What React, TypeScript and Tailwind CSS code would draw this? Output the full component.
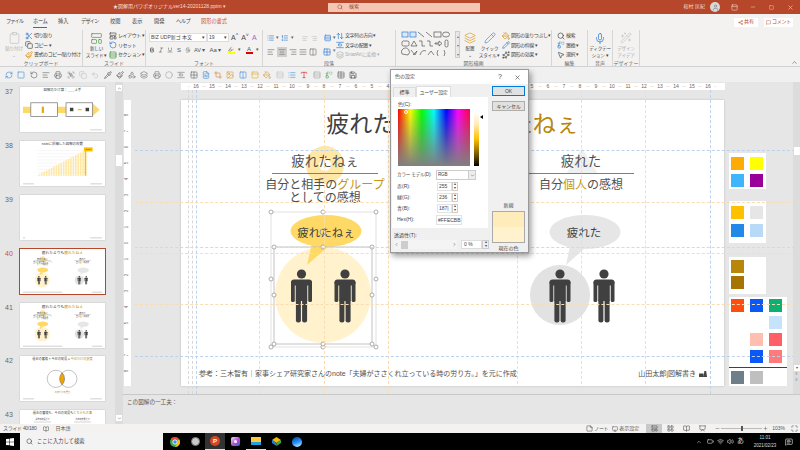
import React from "react";
import {
  Scissors, Copy, Paintbrush, Clipboard, LayoutTemplate, RotateCcw, Rows3, Plus, Search, Share2, MessageSquare,
  Minus, X, Square, Bold, Italic, Underline, Strikethrough, List, ListOrdered, AlignLeft, AlignCenter, AlignRight,
  AlignJustify, Columns2, ArrowUpDown, AlignVerticalSpaceAround, Layers, PaintBucket, Pencil, Sparkles, Replace,
  MousePointer2, Mic, Image, ChevronUp, ChevronDown, ChevronLeft, ChevronRight, RefreshCw, Undo2, Grid2x2,
  Printer, Save, Shapes, Table, Type, Highlighter, FileText, Monitor, LayoutGrid, BookOpen, Presentation, Maximize,
  StickyNote, Wifi, Volume2, Battery, MessageSquareText, User, PanelTop, Circle, Pipette, Wand2, Crop, Group as GroupIcon,
} from "lucide-react";

const GOLD = "#b8860b";
const DARK = "#404040";

function Person({ x, y = 272 }: { x: number; y?: number }) {
  return (
    <g transform={`translate(${x} ${y})`} fill="#404040">
      <circle cx={0} cy={5} r={4.6} />
      <rect x={-10.5} y={10.5} width={21} height={6} rx={3} />
      <rect x={-10.5} y={12} width={3.8} height={21} rx={1.6} />
      <rect x={6.7} y={12} width={3.8} height={21} rx={1.6} />
      <rect x={-5.8} y={12} width={11.6} height={20} />
      <rect x={-5.6} y={30} width={5} height={23.5} rx={2.2} />
      <rect x={0.6} y={30} width={5} height={23.5} rx={2.2} />
    </g>
  );
}

function HandleDot({ x, y }: { x: number; y: number }) {
  return <circle cx={x} cy={y} r={2} fill="#fff" stroke="#8c8c8c" strokeWidth={0.7} />;
}

function LeftFigure() {
  const outer = [[271, 215], [323, 215], [376, 215], [271, 282], [376, 282], [271, 350], [323, 350], [376, 350]];
  const inner = [[274, 250], [323, 250], [372, 250], [274, 298], [372, 298], [274, 347], [323, 347], [372, 347]];
  return (
    <svg viewBox="197 210 256 155" className="w-[256px] h-[155px]">
      <circle cx={323} cy={298} r={48} fill="#fff2cc" />
      <path d="M312 246 L307 268 L330 248 Z" fill="#ffd966" />
      <ellipse cx={326} cy={234} rx={35.5} ry={16} fill="#ffd966" />
      <text x={326} y={239.5} textAnchor="middle" fontSize={11.5} fill={DARK}>疲れたねぇ</text>
      <Person x={301.5} />
      <Person x={345} />
      <rect x={271} y={215} width={105} height={135} fill="none" stroke="#d9d9d9" strokeWidth={0.8} />
      <rect x={274} y={250} width={98} height={97} fill="none" stroke="#bdbdbd" strokeWidth={0.9} />
      {outer.map(([x, y]) => <HandleDot key={`o${x}-${y}`} x={x} y={y} />)}
      {inner.map(([x, y]) => <HandleDot key={`i${x}-${y}`} x={x} y={y} />)}
      <circle cx={323} cy={235} r={3} fill="none" stroke="#999" strokeWidth={1} />
    </svg>
  );
}

function RightFigure() {
  return (
    <svg viewBox="453 210 256 155" className="w-[256px] h-[155px]">
      <circle cx={560} cy={298} r={30} fill="#e2e2e2" />
      <path d="M570 249 L566 268 L585 251 Z" fill="#e7e6e6" />
      <ellipse cx={585} cy={235} rx={35.5} ry={17} fill="#e7e6e6" />
      <text x={584} y={240} textAnchor="middle" fontSize={11.5} fill={DARK}>疲れた</text>
      <Person x={560} />
      <Person x={604} />
    </svg>
  );
}

/* ---------- thumbnails: miniature pictures of slides ---------- */
function Mini({ children }: { children: React.ReactNode }) {
  return <svg viewBox="181 100 543 286" className="w-full h-full block">{children}</svg>;
}
function SlideMini() {
  return (
    <Mini>
      <text x={452} y={133} textAnchor="middle" fontSize={24} fill={DARK}>疲れたよりも<tspan fill={GOLD}>疲れたねぇ</tspan></text>
      <circle cx={325} cy={165} r={19} fill="#ffe599" />
      <text x={325} y={168} textAnchor="middle" fontSize={14} fill={DARK}>疲れたねぇ</text>
      <rect x={272} y={174} width={106} height={1.5} fill="#777" />
      <text x={325} y={191} textAnchor="middle" fontSize={12} fill={DARK}>自分と相手の<tspan fill={GOLD}>グループ</tspan></text>
      <text x={325} y={204} textAnchor="middle" fontSize={12} fill={DARK}>としての感想</text>
      <text x={581} y={168} textAnchor="middle" fontSize={14} fill={DARK}>疲れた</text>
      <rect x={528} y={174} width={106} height={1.5} fill="#777" />
      <text x={581} y={191} textAnchor="middle" fontSize={12} fill={DARK}>自分<tspan fill={GOLD}>個人</tspan>の感想</text>
      <circle cx={323} cy={298} r={48} fill="#fff2cc" />
      <path d="M312 246 L307 268 L330 248 Z" fill="#ffd966" />
      <ellipse cx={326} cy={234} rx={35} ry={16} fill="#ffd966" />
      <circle cx={560} cy={298} r={30} fill="#e2e2e2" />
      <path d="M570 249 L566 268 L585 251 Z" fill="#e7e6e6" />
      <ellipse cx={585} cy={235} rx={35} ry={17} fill="#e7e6e6" />
      <Person x={301.5} /><Person x={345} /><Person x={560} /><Person x={604} />
      <rect x={200} y={373} width={250} height={3} fill="#999" />
      <rect x={640} y={373} width={66} height={3} fill="#999" />
    </Mini>
  );
}
function Thumb37() {
  return (
    <Mini>
      <text x={452} y={128} textAnchor="middle" fontSize={22} fill={DARK}>図解のかけ算：＿＿上手</text>
      <path d="M200 225 H640 V200 L690 245 L640 290 V265 H200 Z" fill="#ffd966" />
      <rect x={250} y={200} width={170} height={88} fill="#fff" stroke="#808080" strokeWidth={5} />
      <rect x={475} y={200} width={170} height={88} fill="#fff" stroke="#808080" strokeWidth={5} />
      <rect x={320} y={225} width={14} height={40} fill="#e8a800" />
      <rect x={500} y={232} width={22} height={22} fill="#404040" />
      <rect x={550} y={240} width={26} height={8} fill="#ffc000" />
      <rect x={600} y={232} width={22} height={22} fill="#404040" />
      <rect x={630} y={372} width={74} height={3} fill="#999" />
    </Mini>
  );
}
function Thumb38() {
  const bars = Array.from({ length: 20 }, (_, i) => i);
  return (
    <Mini>
      <text x={452} y={128} textAnchor="middle" fontSize={22} fill={DARK}>noteに投稿した図解の枚数</text>
      {[160, 180, 200, 220, 240, 260, 280, 300, 320].map((y) => (
        <line key={y} x1={290} x2={620} y1={y} y2={y} stroke="#e5e5e5" strokeWidth={2} />
      ))}
      {bars.map((i) => (
        <rect key={i} x={300 + i * 15.5} y={320 - (i + 1) * 8.2} width={10} height={(i + 1) * 8.2} fill={i === 19 ? "#ffc000" : "#ffe7a6"} />
      ))}
      <rect x={590} y={140} width={55} height={26} fill="#ffc000" />
      <text x={617} y={158} textAnchor="middle" fontSize={15} fill={DARK}>Today</text>
      <rect x={200} y={372} width={70} height={3} fill="#999" />
      <rect x={630} y={372} width={74} height={3} fill="#999" />
    </Mini>
  );
}
function Thumb39() {
  return (
    <Mini>
      <rect x={200} y={372} width={14} height={3} fill="#999" />
      <rect x={630} y={372} width={74} height={3} fill="#999" />
    </Mini>
  );
}
function Thumb42() {
  return (
    <Mini>
      <text x={452} y={128} textAnchor="middle" fontSize={20} fill={DARK}>過去の蓄積 × 今日の発見 = <tspan fill={GOLD}>今日だけの濃度</tspan></text>
      <circle cx={410} cy={245} r={55} fill="#fff" stroke="#808080" strokeWidth={3} />
      <circle cx={490} cy={245} r={55} fill="none" stroke="#808080" strokeWidth={3} />
      <path d="M450 207 A55 55 0 0 1 450 283 A55 55 0 0 1 450 207 Z" fill="#f0a800" stroke="#404040" strokeWidth={2} />
      <text x={452} y={335} textAnchor="middle" fontSize={14} fill={GOLD}>今日だけの濃度</text>
      <rect x={200} y={372} width={70} height={3} fill="#999" />
      <rect x={630} y={372} width={74} height={3} fill="#999" />
    </Mini>
  );
}
function Thumb43() {
  return (
    <Mini>
      <text x={452} y={128} textAnchor="middle" fontSize={20} fill={DARK}>過去の蓄積も、今日の発見も<tspan fill={GOLD}>どちらも大事</tspan></text>
      <text x={325} y={165} textAnchor="middle" fontSize={13} fill={DARK}>過去の蓄積だけ</text>
      <text x={581} y={165} textAnchor="middle" fontSize={13} fill={DARK}>今日の発見だけ</text>
      <rect x={270} y={175} width={110} height={2} fill="#777" />
      <rect x={526} y={175} width={110} height={2} fill="#777" />
    </Mini>
  );
}

function ThumbRow({ n, selected, children }: { n: number; selected?: boolean; children: React.ReactNode }) {
  return (
    <div className="flex h-[53.9px] shrink-0">
      <div className={`w-[20px] pl-[5px] text-[7px] leading-[9px] ${selected ? "text-[#c9543a]" : "text-[#666]"}`}>{n}</div>
      <div className={`w-[85px] h-[45px] bg-white shadow-[0_0_1px_#999] ${selected ? "outline-[1.5px] outline-[#b7472a]" : ""}`}>{children}</div>
    </div>
  );
}

/* ---------- ribbon ---------- */
function Group({ label, w, children }: { label: string; w: string; children: React.ReactNode }) {
  return (
    <div className={`${w} h-[36px] shrink-0 flex flex-col border-r border-[#d6d6d6]`}>
      <div className="h-[30px] flex items-start pt-[1px]">{children}</div>
      <div className="h-[6px] text-center text-[5px] leading-[6px] text-[#666] whitespace-nowrap">{label}</div>
    </div>
  );
}
function Line({ icon, children, grey }: { icon?: React.ReactNode; children: React.ReactNode; grey?: boolean }) {
  return (
    <div className={`flex items-center gap-[1px] h-[9.6px] text-[5px] tracking-[-0.45px] whitespace-nowrap ${grey ? "text-[#b0b0b0]" : "text-[#444]"}`}>
      {icon}
      <span>{children}</span>
    </div>
  );
}
function Big({ icon, lines, grey, w }: { icon: React.ReactNode; lines: string[]; grey?: boolean; w: string }) {
  return (
    <div className={`${w} flex flex-col items-center text-[4.6px] tracking-[-0.2px] leading-[7px] ${grey ? "text-[#aaa]" : "text-[#444]"}`}>
      <div className="h-[14px] flex items-center justify-center">{icon}</div>
      {lines.map((l) => <span key={l} className="whitespace-nowrap">{l}</span>)}
    </div>
  );
}

function ShapesGallery() {
  return (
    <svg viewBox="0 0 54 27" className="w-[54px] h-[27px]" fill="none" stroke="#555" strokeWidth={0.7}>
      <rect x={1} y={1} width={6} height={5} stroke="#2b7cd3" fill="#dbe9f8" />
      <rect x={9} y={1} width={6} height={5} stroke="#2b7cd3" fill="#dbe9f8" />
      <path d="M17 1 L23 6 M25 1 L31 6" />
      <rect x={33} y={1} width={7} height={5} />
      <ellipse cx={45} cy={3.5} rx={3.5} ry={2.5} />
      <rect x={1} y={10} width={7} height={5} rx={1.5} />
      <path d="M10 15 L13 10 L16 15 Z M18 10 H21 V15 H24 M26 10 H29 V15 H32" />
      <path d="M34 12 H38 V10 L41 12.5 L38 15 V13 H34 Z" />
      <rect x={44} y={9} width={3} height={7} rx={1.5} />
      <path d="M1 23 A4 4 0 1 1 7 24 Z M10 19 L14 24 L16 20 L12 24 M19 24 Q21 18 25 20 M27 24 L30 20 L33 24 M37 19 Q35 22 37 25 M43 19 Q45 22 43 25" />
    </svg>
  );
}

const qat: { I: React.ComponentType<any>; c: string }[] = [
  { I: RefreshCw, c: "#2b7cd3" }, { I: Square, c: "#2b7cd3" }, { I: RotateCcw, c: "#555" }, { I: AlignLeft, c: "#555" },
  { I: Printer, c: "#555" }, { I: GroupIcon, c: "#777" }, { I: Copy, c: "#bbb" }, { I: Undo2, c: "#bbb" },
  { I: Pipette, c: "#444" }, { I: Paintbrush, c: "#444" }, { I: Shapes, c: "#666" }, { I: Layers, c: "#666" },
  { I: Printer, c: "#666" }, { I: Circle, c: "#999" }, { I: AlignVerticalSpaceAround, c: "#666" },
  { I: Grid2x2, c: "#555" }, { I: FileText, c: "#2b7cd3" }, { I: Crop, c: "#d2691e" }, { I: Image, c: "#d98b00" },
  { I: Columns2, c: "#2b7cd3" }, { I: PanelTop, c: "#d9a400" }, { I: PaintBucket, c: "#d98b00" }, { I: Rows3, c: "#bbb" },
  { I: List, c: "#2b7cd3" }, { I: Type, c: "#c00" }, { I: Rows3, c: "#999" }, { I: Replace, c: "#3a8f3a" },
  { I: Table, c: "#555" }, { I: Save, c: "#222" },
];

function Ribbon() {
  const ic = "w-[8px] h-[8px] shrink-0";
  return (
    <div className="h-[37px] bg-[#f3f2f1] flex items-start border-b border-[#d2d2d2] relative">
      <Group label="クリップボード" w="w-[83px]">
        <div className="flex pl-[5px]">
          <Big w="w-[18px]" grey lines={["貼り付け", "⌄"]} icon={<Clipboard className="w-[13px] h-[14px] text-[#bbb]" strokeWidth={1.2} />} />
          <div className="ml-[2px]">
            <Line icon={<Scissors className={`${ic} text-[#2b7cd3]`} />}>切り取り</Line>
            <Line icon={<Copy className={ic} />}>コピー ▾</Line>
            <Line icon={<Paintbrush className={`${ic} text-[#d98b00]`} />}>書式のコピー/貼り付け</Line>
          </div>
        </div>
      </Group>
      <Group label="スライド" w="w-[63px]">
        <div className="flex pl-[5px]">
          <Big w="w-[17px]" lines={["新しい", "スライド ▾"]} icon={<LayoutTemplate className="w-[13px] h-[13px] text-[#3a8f3a]" strokeWidth={1.2} />} />
          <div className="ml-[4px]">
            <Line icon={<LayoutTemplate className={ic} />}>レイアウト ▾</Line>
            <Line icon={<RotateCcw className={`${ic} text-[#2b7cd3]`} />}>リセット</Line>
            <Line icon={<Rows3 className={`${ic} text-[#3a8f3a]`} />}>セクション ▾</Line>
          </div>
        </div>
      </Group>
      <Group label="フォント" w="w-[117px]">
        <div className="pl-[3px] pt-[2px]">
          <div className="flex items-center text-[5px] text-[#444]">
            <div className="w-[58px] h-[9px] bg-white border border-[#ddd] px-[1px] leading-[7px] whitespace-nowrap flex justify-between"><span>BIZ UDP新ゴ 本文</span><span>▾</span></div>
            <div className="w-[22px] h-[9px] bg-white border border-[#ddd] px-[1px] leading-[7px] flex justify-between"><span>19</span><span>▾</span></div>
            <div className="flex gap-[3px] ml-[2px] text-[7px] leading-[9px]"><span>A<sup>^</sup></span><span>A<sup>˅</sup></span><span className="text-[#b05fc0]">A</span></div>
          </div>
          <div className="flex items-center gap-[3px] mt-[4px] text-[#555]">
            <Bold className="w-[6px] h-[6px]" strokeWidth={3} />
            <Italic className="w-[6px] h-[6px]" />
            <Underline className="w-[6px] h-[6px]" />
            <span className="text-[6px] leading-[7px] mx-[1px]">S</span>
            <Strikethrough className="w-[6px] h-[6px]" />
            <span className="text-[5.5px] leading-[7px]">AV ▾</span>
            <span className="text-[6px] leading-[7px] ml-[1px]">Aa ▾</span>
            <div className="flex flex-col items-center ml-[3px] w-[7px]"><Highlighter className="w-[6px] h-[6px]" /><div className="w-[7px] h-[2px] bg-[#ffff00]" /></div>
            <span className="text-[5px]">▾</span>
            <div className="flex flex-col items-center ml-[2px] w-[7px] text-[6px] leading-[6px]">A<div className="w-[7px] h-[2px] bg-[#e00000]" /></div>
            <span className="text-[5px]">▾</span>
          </div>
        </div>
      </Group>
      <Group label="段落" w="w-[133px]">
        <div className="flex pl-[4px] pt-[2px]">
          <div className="w-[69px]">
            <div className="flex items-center gap-[2px] h-[10px] text-[#666]">
              <List className="w-[8px] h-[8px] text-[#2b7cd3]" /><span className="text-[4.5px]">▾</span>
              <ListOrdered className="w-[8px] h-[8px] text-[#2b7cd3]" /><span className="text-[4.5px]">▾</span>
              <AlignLeft className="w-[7px] h-[7px] ml-[6px] text-[#bbb]" />
              <AlignRight className="w-[7px] h-[7px] ml-[1px] text-[#bbb]" />
              <Rows3 className="w-[8px] h-[8px] ml-[4px] text-[#2b7cd3]" /><span className="text-[4.5px]">▾</span>
            </div>
            <div className="flex items-center gap-[2px] h-[11px] mt-[3px] text-[#777]">
              <AlignLeft className="w-[8px] h-[8px]" />
              <div className="w-[10px] h-[10px] bg-[#cfcfcf] flex items-center justify-center"><AlignCenter className="w-[8px] h-[8px]" /></div>
              <AlignRight className="w-[8px] h-[8px]" />
              <AlignJustify className="w-[8px] h-[8px]" />
              <Columns2 className="w-[8px] h-[8px]" />
              <Grid2x2 className="w-[8px] h-[8px] ml-[4px] text-[#2b7cd3]" /><span className="text-[4.5px]">▾</span>
            </div>
          </div>
          <div className="-mt-[2px]">
            <Line icon={<ArrowUpDown className={`${ic} text-[#2b7cd3]`} />}>文字列の方向 ▾</Line>
            <Line icon={<AlignVerticalSpaceAround className={`${ic} text-[#2b7cd3]`} />}>文字の配置 ▾</Line>
            <Line grey icon={<Layers className={ic} />}>SmartArt に変換 ▾</Line>
          </div>
        </div>
      </Group>
      <Group label="図形描画" w="w-[156px]">
        <div className="flex pl-[5px]">
          <ShapesGallery />
          <div className="w-[5px] h-[27px] bg-[#e8e8e8] border border-[#ccc] text-[4px] text-center leading-[9px] text-[#777]">▴<br />▾<br />▾</div>
          <Big w="w-[20px]" lines={["配置", "⌄"]} icon={<Layers className="w-[12px] h-[12px] text-[#d98b00]" strokeWidth={1.2} />} />
          <Big w="w-[19px]" lines={["クイック", "スタイル ▾"]} icon={<Pencil className="w-[12px] h-[12px] text-[#2b7cd3]" strokeWidth={1.2} />} />
          <div className="ml-[3px]">
            <Line icon={<PaintBucket className={`${ic} text-[#d98b00]`} />}>図形の塗りつぶし ▾</Line>
            <Line icon={<Pencil className={`${ic} text-[#2b7cd3]`} />}>図形の枠線 ▾</Line>
            <Line icon={<Sparkles className={ic} />}>図形の効果 ▾</Line>
          </div>
        </div>
      </Group>
      <Group label="編集" w="w-[36px]">
        <div className="pl-[5px]">
          <Line icon={<Search className={ic} />}>検索</Line>
          <Line icon={<Replace className={`${ic} text-[#2b7cd3]`} />}>置換 ▾</Line>
          <Line icon={<MousePointer2 className={ic} />}>選択 ▾</Line>
        </div>
      </Group>
      <Group label="音声" w="w-[25px]">
        <Big w="w-[25px]" lines={["ディクテー", "ション ▾"]} icon={<Mic className="w-[12px] h-[13px] text-[#2b7cd3]" strokeWidth={1.5} />} />
      </Group>
      <Group label="デザイナー" w="w-[27px]">
        <Big w="w-[27px]" grey lines={["デザイン", "アイデア"]} icon={<Wand2 className="w-[12px] h-[12px] text-[#bbb]" strokeWidth={1.2} />} />
      </Group>
      <ChevronUp className="absolute right-[2px] bottom-0 w-[7px] h-[7px] text-[#555]" />
    </div>
  );
}

/* ---------- color dialog ---------- */
function SpinRow({ label, value, cursor }: { label: string; value: string; cursor?: boolean }) {
  return (
    <div className="flex items-center h-[9px] mt-[2px] pl-[5px] text-[5px] text-[#444]">
      <span className="w-[40px]">{label}</span>
      <div className="w-[15px] h-[9px] border border-[#e2e2e2] leading-[7px] pl-[1px]">{value}{cursor ? "|" : ""}</div>
      <div className="w-[6px] h-[9px] border border-[#ccc] text-[3.5px] leading-[3.5px] text-center text-[#444]">▴<br />▾</div>
    </div>
  );
}

function ColorDialog() {
  return (
    <div className="absolute left-[390px] top-[69px] w-[139px] h-[184px] bg-[#f0f0f0] border border-[#9a9a9a] shadow-[2px_3px_6px_rgba(0,0,0,0.4)] text-[#444]">
      <div className="h-[14px] flex items-center pl-[4px] bg-white text-[5px]">
        <span>色の設定</span>
        <span className="ml-auto text-[7px]">?</span>
        <X className="w-[7px] h-[7px] ml-[12px] mr-[7px]" />
      </div>
      <div className="flex pt-[2px]">
        <div className="w-[100px] pl-[1px]">
          <div className="flex h-[11px] text-[5px] items-end">
            <div className="w-[23px] text-center leading-[9px] border-t border-x border-[#ddd] ml-[1px]">標準</div>
            <div className="w-[35px] h-[11px] text-center leading-[11px] bg-white border-t border-x border-[#ddd] tracking-[-0.3px]">ユーザー設定</div>
          </div>
          <div className="w-[96px] h-[131px] bg-white pt-[4px]">
            <div className="pl-[6px] text-[5px] leading-[7px]">色(C):</div>
            <div className="flex pl-[6px] mt-[1px] h-[58px]">
              <div className="relative w-[72px] h-[57px] bg-[linear-gradient(to_right,#ff0000,#ffff00_17%,#00ff00_33%,#00ffff_50%,#0000ff_67%,#ff00ff_83%,#ff0040)]">
                <div className="w-full h-full bg-linear-to-b from-transparent to-[#808080]" />
                <div className="absolute left-[6px] top-[1px] w-[4px] h-[4px] rounded-full border border-white" />
              </div>
              <div className="w-[5px] h-[54px] ml-[4px] mt-[3px] bg-[linear-gradient(to_bottom,#ffffff,#ffecbb_22%,#ffc000_50%,#7a5c00_78%,#000000)]" />
              <div className="ml-[1px] mt-[6px] w-0 h-0 border-y-[2.5px] border-y-transparent border-r-[3px] border-r-black" />
            </div>
            <div className="flex items-center h-[10px] mt-[3px] pl-[5px] text-[4.6px] tracking-[-0.2px]">
              <span className="w-[39px] whitespace-nowrap">カラー モデル(D):</span>
              <div className="w-[40px] h-[10px] border border-[#ccc] flex items-center pl-[1px] justify-between">
                RGB
                <div className="w-[7px] h-[8px] bg-[#eee] border-l border-[#ccc] flex items-center justify-center"><ChevronDown className="w-[5px] h-[5px]" /></div>
              </div>
            </div>
            <SpinRow label="赤(R):" value="255" />
            <SpinRow label="緑(G):" value="236" />
            <SpinRow label="青(B):" value="187" cursor />
            <div className="flex items-center h-[10px] mt-[2px] pl-[5px] text-[5px]">
              <span className="w-[39px]">Hex(H):</span>
              <div className="w-[26px] h-[10px] border border-[#e2e2e2] leading-[8px] pl-[1px]">#FFECBB</div>
            </div>
          </div>
          <div className="text-[5px] leading-[7px] mt-[4px] pl-[2px]">透過性(T):</div>
          <div className="flex items-center mt-[1px] pl-[2px] h-[9px]">
            <div className="w-[63px] h-[9px] bg-[#f4f4f4] flex items-center">
              <ChevronLeft className="w-[5px] h-[5px]" />
              <div className="w-[7px] h-[8px] bg-[#cdcdcd] ml-[2px]" />
              <ChevronRight className="w-[5px] h-[5px] ml-auto" />
            </div>
            <div className="w-[21px] h-[9px] ml-[4px] bg-white border border-[#ddd] text-[5px] leading-[7px] pl-[2px]">0 %</div>
            <div className="w-[7px] h-[9px] border border-[#ccc] text-[3.5px] leading-[3.5px] text-center">▴<br />▾</div>
          </div>
        </div>
        <div className="w-[33px] ml-[1px] text-[5px] text-center">
          <div className="h-[10px] bg-[#e1e1e1] border border-[#0078d7] leading-[8px]">OK</div>
          <div className="h-[10px] mt-[5px] bg-[#e1e1e1] border border-[#adadad] leading-[8px] tracking-[-0.2px]">キャンセル</div>
          <div className="mt-[91px] leading-[7px]">新規</div>
          <div className="h-[32px] mt-[2px] border border-[#aaa] flex flex-col">
            <div className="flex-1 bg-[#ffecbb]" />
            <div className="flex-1 bg-[#fff2cc]" />
          </div>
          <div className="mt-[2px] leading-[7px]">現在の色</div>
        </div>
      </div>
    </div>
  );
}

/* ---------- guides, swatches ---------- */
const vGuides: [number, string][] = [
  [188, "border-[#d8d8d8]"], [192, "border-[#d8d8d8]"], [196, "border-[#bcd2ec]"], [259, "border-[#fadcb2]"], [324, "border-[#fadcb2]"],
  [388, "border-[#fadcb2]"], [517, "border-[#fadcb2]"], [581, "border-[#fadcb2]"], [645, "border-[#fadcb2]"], [710, "border-[#bcd2ec]"],
];
const hGuides: [number, string][] = [
  [150, "border-[#bcd2ec]"], [202, "border-[#fadcb2]"], [247, "border-[#d8d8d8]"], [253, "border-[#fadcb2]"], [304, "border-[#fadcb2]"], [356, "border-[#bcd2ec]"],
];

function Sw({ c }: { c: string | null }) {
  return <div className="w-[13px] h-[13px]" style={c ? { backgroundColor: c } : undefined} />;
}

const ruler = [16, 15, 14, 13, 12, 11, 10, 9, 8, 7, 6, 5, 4, 3, 2, 1, 0, 1, 2, 3, 4, 5, 6, 7, 8, 9, 10, 11, 12, 13, 14, 15, 16];
const vRuler = [8, 7, 6, 5, 4, 3, 2, 1, 0, 1, 2, 3, 4, 5, 6, 7, 8];

export default function App() {
  return (
    <div className="relative w-[800px] h-[450px] overflow-hidden bg-[#e6e6e6] font-['Liberation_Sans','Noto_Sans_CJK_JP',sans-serif]">
      {/* Title bar */}
      <div className="h-[14px] bg-[#b7472a] flex items-center text-white">
        <span className="ml-[113px] w-[115px] text-[5px] text-[#f7dcd3] whitespace-nowrap">★図解用パワポオリジナルver14-20201128.pptm ▾</span>
        <div className="ml-[100px] w-[152px] h-[9px] bg-[#f5c6b4] flex items-center pl-[9px] text-[#8a4a35] text-[5px]">
          <Search className="w-[6px] h-[6px]" />
          <span className="ml-[6px]">検索</span>
        </div>
        <div className="ml-auto flex items-center text-[#f3d6cc]">
          <span className="text-[5px] whitespace-nowrap">桜村 匡紀</span>
          <div className="w-[10px] h-[10px] rounded-full bg-[#d9d9d9] ml-[5px] flex items-center justify-center"><User className="w-[7px] h-[7px] text-[#777]" /></div>
          <PanelTop className="w-[7px] h-[7px] ml-[11px]" />
          <Minus className="w-[6px] h-[6px] ml-[12px]" />
          <Square className="w-[5px] h-[5px] ml-[13px]" />
          <X className="w-[7px] h-[7px] ml-[13px] mr-[6px]" />
        </div>
      </div>
      {/* Tabs */}
      <div className="h-[16px] bg-[#f3f2f1] flex items-center text-[5.2px] text-[#444] relative">
        <span className="ml-[6px] w-[27px] tracking-[-0.9px]">ファイル</span>
        <span className="w-[25px] text-[#333] relative tracking-[-0.3px]">ホーム<span className="absolute left-0 right-[11px] -bottom-[2px] h-[1px] bg-[#b7472a]" /></span>
        <span className="w-[23px]">挿入</span>
        <span className="w-[29px] tracking-[-0.8px]">デザイン</span>
        <span className="w-[22px]">校閲</span>
        <span className="w-[22px]">表示</span>
        <span className="w-[22px]">開発</span>
        <span className="w-[25px] tracking-[-0.5px]">ヘルプ</span>
        <span className="text-[#c9543a]">図形の書式</span>
        <div className="ml-auto flex items-center gap-[6px] mr-[7px]">
          <div className="w-[24px] h-[9px] bg-white flex items-center justify-center gap-[1px] text-[#b7472a] text-[5px]"><Share2 className="w-[5px] h-[5px]" />共有</div>
          <div className="w-[29px] h-[9px] bg-white flex items-center justify-center gap-[1px] text-[#b7472a] text-[5px] tracking-[-0.3px]"><MessageSquare className="w-[5px] h-[5px]" />コメント</div>
        </div>
      </div>
      <Ribbon />
      {/* Quick access row */}
      <div className="h-[15px] bg-[#f0f0f0] flex items-center pl-[3px]">
        {qat.map(({ I, c }, i) => (
          <div key={i} className="w-[12.3px] flex justify-center"><I className="w-[8px] h-[8px]" style={{ color: c }} strokeWidth={1.6} /></div>
        ))}
      </div>
      {/* Main */}
      <div className="h-[342px] flex">
        <div className="w-[115px] pt-[5px] overflow-hidden">
          <ThumbRow n={37}><Thumb37 /></ThumbRow>
          <ThumbRow n={38}><Thumb38 /></ThumbRow>
          <ThumbRow n={39}><Thumb39 /></ThumbRow>
          <ThumbRow n={40} selected><SlideMini /></ThumbRow>
          <ThumbRow n={41}><SlideMini /></ThumbRow>
          <ThumbRow n={42}><Thumb42 /></ThumbRow>
          <ThumbRow n={43}><Thumb43 /></ThumbRow>
        </div>
        <div className="w-[8px] bg-[#dcdcdc] flex flex-col items-center py-[3px]">
          <div className="w-[6px] h-[6px] bg-white flex items-center justify-center"><ChevronUp className="w-[5px] h-[5px] text-[#444]" /></div>
          <div className="w-[6px] h-[11px] bg-white mt-[64px]" />
          <div className="w-[6px] h-[6px] bg-white mt-auto flex items-center justify-center"><ChevronDown className="w-[5px] h-[5px] text-[#444]" /></div>
        </div>
        {/* Canvas */}
        <div className="relative flex-1 flex flex-col overflow-hidden">
          <div className="flex-1 relative">
            <div className="ml-[58px] mt-[1px] w-[544px] h-[7px] bg-white flex items-center pl-[7px] text-[5px] leading-[7px] text-[#666]">
              {ruler.map((n, i) => (
                <div key={i} className="w-[16px] shrink-0 flex items-center justify-between">
                  <span>·</span><span>{n}</span><span>·</span>
                </div>
              ))}
            </div>
            <div className="flex mt-[10px] items-start">
              <div className="w-[7px] ml-[1px] h-[286px] bg-white flex flex-col items-center pt-[7px] text-[4.5px] text-[#777] shrink-0">
                {vRuler.map((n, i) => (
                  <div key={i} className="h-[16px] shrink-0 leading-[16px] rotate-[-90deg]">{n}</div>
                ))}
              </div>
              {/* Slide */}
              <div className="ml-[50px] w-[543px] h-[286px] bg-white shadow-[0_0_2px_#bbb] shrink-0 flex flex-col">
                <div className="h-[48px] pt-[10px] flex justify-center text-[23px] leading-[28px] whitespace-nowrap text-[#404040]">
                  <span>疲れたよりも<span className="text-[#b8860b]">疲れたねぇ</span></span>
                </div>
                <div className="h-[217px] grid grid-cols-[256px_256px] pl-[16px]">
                  <div className="flex flex-col items-center relative">
                    <div className="absolute left-[109px] top-[-2px] w-[38px] h-[38px] rounded-full border-[13px] border-[#ffe8a6]" />
                    <div className="relative h-[26px] w-[106px] text-center text-[13.5px] leading-[28px] text-[#505050] border-b-[1.5px] border-[#7f7f7f]">疲れたねぇ</div>
                    <div className="relative text-[12px] leading-[13px] mt-[5px] text-[#505050] text-center whitespace-nowrap">
                      自分と相手の<span className="text-[#c59410]">グループ</span><br />としての感想
                    </div>
                    <div className="mt-[2px] w-[256px] -mb-[30px] relative"><LeftFigure /></div>
                  </div>
                  <div className="flex flex-col items-center relative">
                    <svg viewBox="0 0 32 26" className="absolute left-[113px] top-[0px] w-[32px] h-[26px]"><path d="M16 0 L32 26 H0 Z" fill="#f0f0f0" /></svg>
                    <div className="relative h-[26px] w-[106px] text-center text-[13.5px] leading-[28px] text-[#505050] border-b-[1.5px] border-[#7f7f7f]">疲れた</div>
                    <div className="relative text-[12px] leading-[13px] mt-[5px] text-[#505050] whitespace-nowrap">
                      自分<span className="text-[#c59410]">個人</span>の感想<br />&nbsp;
                    </div>
                    <div className="mt-[2px] w-[256px] -mb-[30px] relative"><RightFigure /></div>
                  </div>
                </div>
                <div className="flex justify-between items-center pl-[18px] pr-[16px] pt-[3px] text-[7px] leading-[12px] text-[#505050] whitespace-nowrap">
                  <span>参考：三木智有｜家事シェア研究家さんのnote「夫婦がささくれ立っている時の労り方。」を元に作成</span>
                  <span className="flex items-center gap-[3px]">山田太郎|図解書き
                    <svg viewBox="0 0 10 9" className="w-[9px] h-[8px]"><path d="M0 4 H5 V8 H0 Z M6 1 L8 1 L9 8 H5 Z" fill="#444" /></svg>
                  </span>
                </div>
              </div>
              {/* Off-slide swatches */}
              <div className="ml-[5px] mt-[53px] flex flex-col shrink-0">
                <div className="w-[37px] h-[36px] bg-white pl-[2px] pt-[4px] grid grid-cols-[13px_13px] gap-x-[6px] gap-y-[4px] mb-[12px] content-start">
                  <Sw c="#fcac05" /><Sw c="#ffff00" /><Sw c="#3fb5fb" /><Sw c="#990099" />
                </div>
                <div className="w-[37px] h-[42px] bg-white pl-[2px] pt-[5px] grid grid-cols-[13px_13px] gap-x-[6px] gap-y-[5px] mb-[14px] content-start">
                  <Sw c="#ffc000" /><Sw c="#e7e6e6" /><Sw c="#2389e8" /><Sw c="#b8daf7" />
                </div>
                <div className="w-[37px] h-[37px] bg-white pl-[2px] pt-[3px] grid grid-cols-[13px_13px] gap-x-[6px] gap-y-[3px] mb-[3px] content-start">
                  <Sw c="#b8860b" /><Sw c={null} /><Sw c="#a67400" /><Sw c={null} />
                </div>
                <div className="w-[58px] h-[89px] bg-white pt-[2px]">
                  <div className="pl-[2px] grid grid-cols-[13px_13px_13px] gap-x-[6px] gap-y-[4px] content-start">
                    <Sw c="#ff4d0f" /><Sw c="#0a58f5" /><Sw c="#0db070" />
                    <Sw c={null} /><Sw c={null} /><Sw c="#c5e3fb" />
                    <Sw c={null} /><Sw c="#ffbfb0" /><Sw c="#ff5f67" />
                    <Sw c={null} /><Sw c="#0a58f5" /><Sw c="#ff7a7a" />
                  </div>
                  <div className="h-[1px] bg-[#404040] mt-[4px] mb-[3px]" />
                  <div className="pl-[2px] flex gap-x-[6px]"><Sw c="#6f7f8a" /><Sw c="#bfbfbf" /></div>
                </div>
              </div>
            </div>
            {/* Guides over the canvas */}
            {vGuides.map(([x, c]) => (
              <div key={x} className={`absolute top-[8px] h-[304px] border-l border-dashed ${c}`} style={{ left: x - 123 }} />
            ))}
            {hGuides.map(([y, c]) => (
              <div key={y} className={`absolute left-[12px] right-0 border-t border-dashed ${c}`} style={{ top: y - 82 }} />
            ))}
            {/* Right scrollbar */}
            <div className="absolute right-0 top-0 bottom-0 w-[7px] bg-[#dcdcdc] flex flex-col items-center">
              <div className="w-[6px] h-[8px] bg-white mt-[65px]" />
              <div className="mt-auto mb-[11px] flex flex-col items-center text-[4px] leading-[6px] text-[#555]">
                <div className="w-[6px] h-[6px] bg-white text-center">▾</div>
                <span>≡</span><span>≡</span>
              </div>
            </div>
          </div>
          <div className="h-[30px] shrink-0 border-t border-[#c8c8c8] pl-[4px] pt-[3px] text-[5.6px] leading-[9px] text-[#555]">この図解の一工夫：</div>
        </div>
      </div>
      {/* Status bar */}
      <div className="h-[9px] bg-[#f3f2f1] flex items-center text-[5px] text-[#555] whitespace-nowrap">
        <span className="ml-[3px] tracking-[-0.3px]">スライド 40/180</span>
        <BookOpen className="w-[6px] h-[6px] ml-[7px]" />
        <span className="ml-[6px]">日本語</span>
        <div className="ml-auto flex items-center h-[9px]">
          <StickyNote className="w-[7px] h-[7px]" />
          <span className="ml-[1px] w-[18px] tracking-[-0.3px]">ノート</span>
          <Monitor className="w-[6px] h-[6px]" />
          <span className="ml-[1px]">表示設定</span>
          <div className="w-[16px] h-[9px] bg-[#c8c8c8] ml-[7px] flex items-center justify-center"><LayoutTemplate className="w-[7px] h-[7px]" /></div>
          <LayoutGrid className="w-[7px] h-[7px] ml-[5px]" />
          <BookOpen className="w-[7px] h-[7px] ml-[9px]" />
          <Presentation className="w-[7px] h-[7px] ml-[9px]" />
          <Minus className="w-[5px] h-[5px] ml-[9px]" />
          <div className="relative w-[41px] h-[1px] bg-[#bbb] ml-[1px]"><div className="absolute left-[20px] -top-[2px] w-[2px] h-[5px] bg-[#555]" /></div>
          <Plus className="w-[5px] h-[5px] ml-[1px]" />
          <span className="ml-[4px]">103%</span>
          <Maximize className="w-[7px] h-[7px] ml-[6px] mr-[2px]" />
        </div>
      </div>
      {/* Taskbar */}
      <div className="h-[17px] bg-black flex items-center text-white">
        <div className="w-[20px] flex justify-center">
          <svg viewBox="0 0 10 10" className="w-[8px] h-[8px]" fill="#fff"><path d="M0 1.4 4.2.8V4.7H0Z M4.8.7 10 0V4.7H4.8Z M0 5.3H4.2V9.2L0 8.6Z M4.8 5.3H10V10L4.8 9.3Z" /></svg>
        </div>
        <div className="w-[143px] h-[17px] bg-[#f3f3f3] flex items-center text-[#444] text-[5.3px]">
          <Search className="w-[7px] h-[7px] ml-[6px]" />
          <span className="ml-[4px]">ここに入力して検索</span>
        </div>
        <div className="flex items-center ml-[2px]">
          <div className="w-[20px] flex justify-center">
            <svg viewBox="0 0 12 12" className="w-[10px] h-[10px]">
              <circle cx={6} cy={6} r={6} fill="#34a853" />
              <path d="M6 0 A6 6 0 0 1 11.2 3 H6 A3 3 0 0 0 3.4 4.5 L1 2.2 A6 6 0 0 1 6 0 Z" fill="#ea4335" />
              <path d="M11.2 3 A6 6 0 0 1 6 12 L8.6 7.5 A3 3 0 0 0 8.6 4.5 Z" fill="#fbbc05" />
              <circle cx={6} cy={6} r={2.6} fill="#4285f4" stroke="#fff" />
            </svg>
          </div>
          <div className="w-[20px] flex justify-center"><div className="w-[9px] h-[9px] rounded-full bg-[#c9c9c9] border border-[#777]" /></div>
          <div className="w-[20px] h-[17px] bg-[#333] border-b border-[#ddd] flex items-center justify-center">
            <div className="w-[10px] h-[10px] rounded-full bg-[#d24726] flex items-center justify-center text-[6px] leading-[6px] font-bold">P</div>
          </div>
          <div className="w-[21px] flex justify-center">
            <div className="w-[9px] h-[9px] rounded-[2px] bg-[linear-gradient(135deg,#e8e8ff,#c050d0,#3060e0)] flex items-center justify-center"><div className="w-[3px] h-[3px] rounded-full bg-white" /></div>
          </div>
          <div className="w-[20px] h-[17px] border-b border-[#ddd] flex items-center justify-center">
            <div className="w-[10px] h-[8px] bg-[#ffc83d] border-b-[3px] border-[#1fa0e0]" />
          </div>
          <div className="w-[20px] flex justify-center">
            <svg viewBox="0 0 12 12" className="w-[9px] h-[9px]"><path d="M6 0 12 4 6 8 0 4Z" fill="#f5b800" /><path d="M0 4 6 8V12L0 8Z" fill="#1f7fd1" /><path d="M12 4 6 8V12L12 8Z" fill="#3aa655" /></svg>
          </div>
          <div className="w-[21px] flex justify-center">
            <div className="w-[10px] h-[10px] rounded-full bg-[linear-gradient(160deg,#0a3c8a,#1e90ff,#e8f6ff)]" />
          </div>
        </div>
        <div className="ml-auto flex items-center text-[#ddd]">
          <ChevronUp className="w-[6px] h-[6px]" />
          <Battery className="w-[7px] h-[7px] ml-[5px]" />
          <Wifi className="w-[7px] h-[7px] ml-[3px]" />
          <Volume2 className="w-[7px] h-[7px] ml-[3px]" />
          <span className="text-[7px] ml-[3px]">あ</span>
          <div className="w-[26px] ml-[8px] text-center text-[4.5px] leading-[8px] whitespace-nowrap">
            <div>11:01</div>
            <div>2021/02/23</div>
          </div>
          <div className="ml-[7px] mr-[7px] relative">
            <MessageSquareText className="w-[8px] h-[8px]" />
          </div>
        </div>
      </div>
      <ColorDialog />
    </div>
  );
}
